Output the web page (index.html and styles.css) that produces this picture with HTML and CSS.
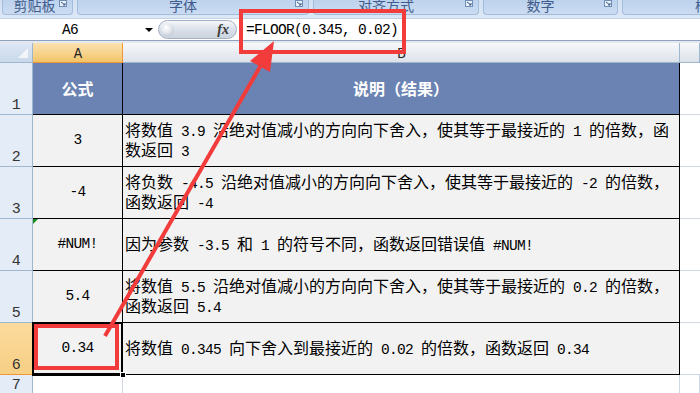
FILE: index.html
```html
<!DOCTYPE html>
<html lang="zh-CN">
<head>
<meta charset="utf-8">
<title>FLOOR</title>
<link rel="stylesheet" href="styles.css">
</head>
<body>
<div class="ribbon">
  <div class="grp g1"><span>剪贴板</span><svg class="launch" viewBox="0 0 8 7"><rect x="0.5" y="0.5" width="7" height="6" fill="#e8f0fa" stroke="#6f8db5"/><path d="M2 2 L6 5 M6 3 V5 H4" stroke="#3c5a88" fill="none"/></svg></div>
  <div class="grp g2"><span>字体</span><svg class="launch" viewBox="0 0 8 7"><rect x="0.5" y="0.5" width="7" height="6" fill="#e8f0fa" stroke="#6f8db5"/><path d="M2 2 L6 5 M6 3 V5 H4" stroke="#3c5a88" fill="none"/></svg></div>
  <div class="grp g3"><span>对齐方式</span><svg class="launch" viewBox="0 0 8 7"><rect x="0.5" y="0.5" width="7" height="6" fill="#e8f0fa" stroke="#6f8db5"/><path d="M2 2 L6 5 M6 3 V5 H4" stroke="#3c5a88" fill="none"/></svg></div>
  <div class="grp g4"><span>数字</span><svg class="launch" viewBox="0 0 8 7"><rect x="0.5" y="0.5" width="7" height="6" fill="#e8f0fa" stroke="#6f8db5"/><path d="M2 2 L6 5 M6 3 V5 H4" stroke="#3c5a88" fill="none"/></svg></div>
  <div class="grp g5"><span>样式</span></div>
</div>

<div class="fbar">
  <div class="namebox"><span class="n">A6</span></div>
  <div class="dd"><i class="tri"></i></div>
  <div class="fxbtn"><i class="knob"></i><span class="fx">fx</span></div>
  <div class="formula"><span class="n">=FLOOR(0.345, 0.02)</span></div>
</div>
<div class="sep"></div>

<div class="sheet">
  <div class="ch corner"><i class="ctri"></i></div>
  <div class="ch sel"><span class="n">A</span></div>
  <div class="ch"><span class="n">B</span></div>
  <div class="ch"></div>

  <div class="rh"><span class="n">1</span></div>
  <div class="c hd">公式</div>
  <div class="c hd">说明（结果）</div>
  <div class="cx"></div>

  <div class="rh"><span class="n">2</span></div>
  <div class="c va"><span class="n">3</span></div>
  <div class="c vb"><p>将数值<span class="n"> 3.9 </span>沿绝对值减小的方向向下舍入，使其等于最接近的<span class="n"> 1 </span>的倍数，函<br>数返回<span class="n"> 3</span></p></div>
  <div class="cx"></div>

  <div class="rh"><span class="n">3</span></div>
  <div class="c va"><span class="n">-4</span></div>
  <div class="c vb"><p>将负数<span class="n"> -4.5 </span>沿绝对值减小的方向向下舍入，使其等于最接近的<span class="n"> -2 </span>的倍数，<br>函数返回<span class="n"> -4</span></p></div>
  <div class="cx"></div>

  <div class="rh"><span class="n">4</span></div>
  <div class="c va err"><span class="n">#NUM!</span></div>
  <div class="c vb"><p>因为参数<span class="n"> -3.5 </span>和<span class="n"> 1 </span>的符号不同，函数返回错误值<span class="n"> #NUM!</span></p></div>
  <div class="cx"></div>

  <div class="rh"><span class="n">5</span></div>
  <div class="c va"><span class="n">5.4</span></div>
  <div class="c vb"><p>将数值<span class="n"> 5.5 </span>沿绝对值减小的方向向下舍入，使其等于最接近的<span class="n"> 0.2 </span>的倍数，<br>函数返回<span class="n"> 5.4</span></p></div>
  <div class="cx"></div>

  <div class="rh rsel"><span class="n">6</span></div>
  <div class="c va active"><span class="n">0.34</span><i class="handle"></i></div>
  <div class="c vb"><p>将数值<span class="n"> 0.345 </span>向下舍入到最接近的<span class="n"> 0.02 </span>的倍数，函数返回<span class="n"> 0.34</span></p></div>
  <div class="cx"></div>

  <div class="rh"><span class="n">7</span></div>
  <div class="e"></div>
  <div class="e"></div>
  <div class="e"></div>
</div>

<svg class="annot" width="700" height="393" viewBox="0 0 700 393">
  <rect x="241" y="11" width="163" height="41" fill="none" stroke="#f23b3b" stroke-width="4"/>
  <rect x="36" y="326" width="81" height="42" fill="none" stroke="#f23b3b" stroke-width="4"/>
  <line x1="105" y1="336" x2="261" y2="65" stroke="#f23b3b" stroke-width="4"/>
  <polygon points="274,41 270,72 250,61" fill="#f23b3b"/>
</svg>
</body>
</html>
```

FILE: styles.css
```css
* { box-sizing: border-box; margin: 0; padding: 0; }

body {
  width: 700px;
  height: 393px;
  overflow: hidden;
  position: relative;
  background: #fff;
  font-family: "Noto Sans CJK SC", sans-serif;
  color: #000;
}

.n {
  font-family: "Liberation Mono", monospace;
  font-size: 14.5px;
  letter-spacing: -0.7px;
  white-space: pre;
}

/* ribbon */
.ribbon {
  height: 18px;
  display: flex;
  gap: 4px;
  padding-left: 2px;
  background: linear-gradient(#d3e1f2, #dde8f6);
  overflow: hidden;
}
.grp {
  position: relative;
  flex-shrink: 0;
  height: 15px;
  display: flex;
  justify-content: center;
  padding-right: 20px;
  background: linear-gradient(#bdd2ed, #cbdcf2);
  border: 1px solid #a3bcdc;
  border-top: none;
  border-radius: 0 0 4px 4px;
  color: #3f5c8c;
  font-size: 14px;
  line-height: 14px;
  overflow: hidden;
}
.grp span { margin-top: -2px; }
.g1 { width: 71px; padding-right: 6px; }
.g2 { width: 232px; }
.g3 { width: 166px; }
.g4 { width: 135px; }
.g5 { width: 120px; justify-content: flex-start; padding-left: 72px; }
.launch {
  position: absolute;
  right: 5px;
  top: 0;
  width: 8px;
  height: 7px;
}

/* formula bar */
.fbar {
  height: 23px;
  display: flex;
  background: #fff;
  border-top: 1px solid #c2d1e5;
  border-bottom: 1px solid #8ea2bd;
}
.namebox {
  width: 140px;
  display: flex;
  align-items: center;
  justify-content: center;
}
.dd {
  width: 18px;
  display: flex;
  align-items: center;
  padding-left: 5px;
}
.tri {
  display: block;
  width: 0;
  height: 0;
  border-left: 4px solid transparent;
  border-right: 4px solid transparent;
  border-top: 4px solid #000;
}
.fxbtn {
  width: 79px;
  height: 19px;
  margin-top: 1px;
  position: relative;
  border: 1px solid #a4b1c4;
  border-radius: 10px;
  background: linear-gradient(#f4f6f9, #d8dfe8 55%, #cbd3de);
  display: flex;
  align-items: center;
  justify-content: flex-end;
  padding-right: 7px;
}
.knob {
  position: absolute;
  left: 2px;
  top: 2px;
  width: 13px;
  height: 13px;
  border-radius: 50%;
  background: radial-gradient(circle at 40% 35%, #ffffff, #dfe4ea 50%, #a9b3c0);
}
.fx {
  font-family: "Liberation Serif", serif;
  font-style: italic;
  font-weight: bold;
  font-size: 14px;
  color: #3a3a3a;
}
.formula {
  flex: 1;
  display: flex;
  align-items: center;
  padding-left: 7px;
  margin-left: 2px;
}
.sep {
  height: 2px;
  background: #e4e9f1;
}

/* sheet */
.sheet {
  display: grid;
  grid-template-columns: 33px 90px 557px 20px;
  grid-template-rows: 20px repeat(6, 52px) 20px;
}
.ch {
  border-right: 1px solid #9eb6ce;
  border-bottom: 1px solid #9eb6ce;
  background: linear-gradient(#f7f8fa, #e9edf2 50%, #dde2ea);
  display: flex;
  align-items: flex-end;
  justify-content: center;
  line-height: 15px;
  color: #222;
}
.ch .n { font-size: 14px; }
.corner {
  position: relative;
  background: linear-gradient(#dde7f4, #c9d8eb);
}
.ctri {
  position: absolute;
  right: 4px;
  bottom: 4px;
  width: 0;
  height: 0;
  border-left: 10px solid transparent;
  border-bottom: 10px solid #f2f5fa;
}
.ch.sel {
  background: linear-gradient(#fae2b0, #f7d48f 50%, #f2c465);
  border-right: 1px solid #f29536;
  border-bottom: 1px solid #f29536;
}
.rh {
  border-right: 1px solid #9eb6ce;
  border-bottom: 1px solid #9eb6ce;
  background: #e4ecf7;
  display: flex;
  align-items: flex-end;
  justify-content: center;
  line-height: 16px;
  color: #333;
}
.rh .n { font-size: 15px; }
.rh.rsel {
  background: linear-gradient(#fbdb9c, #f7cf85);
  border-right: 1px solid #f29536;
  border-bottom: 1px solid #f29536;
}
.c {
  border-right: 1px solid #000;
  border-bottom: 1px solid #000;
  background: #f2f2f2;
  display: flex;
  align-items: center;
  font-size: 16px;
  line-height: 17px;
  white-space: nowrap;
  position: relative;
}
.hd {
  background: #6b83b2;
  color: #fff;
  font-weight: bold;
  justify-content: center;
}
.va { justify-content: center; }
.vb { padding-left: 2px; }
.vb p { line-height: 17px; }
.err::before {
  content: "";
  position: absolute;
  left: 0;
  top: 0;
  border-top: 5px solid #1a8a1a;
  border-right: 5px solid transparent;
}
.active {
  box-shadow: inset 0 0 0 1px #000, 0 0 0 1px #000;
}
.handle {
  position: absolute;
  right: -4px;
  bottom: -4px;
  width: 6px;
  height: 6px;
  background: #000;
  border: 1px solid #fff;
  z-index: 2;
}
.cx {
  border-bottom: 1px solid #d0d7e5;
}
.e {
  border-right: 1px solid #d0d7e5;
}
.annot {
  position: absolute;
  left: 0;
  top: 0;
  pointer-events: none;
}
```
